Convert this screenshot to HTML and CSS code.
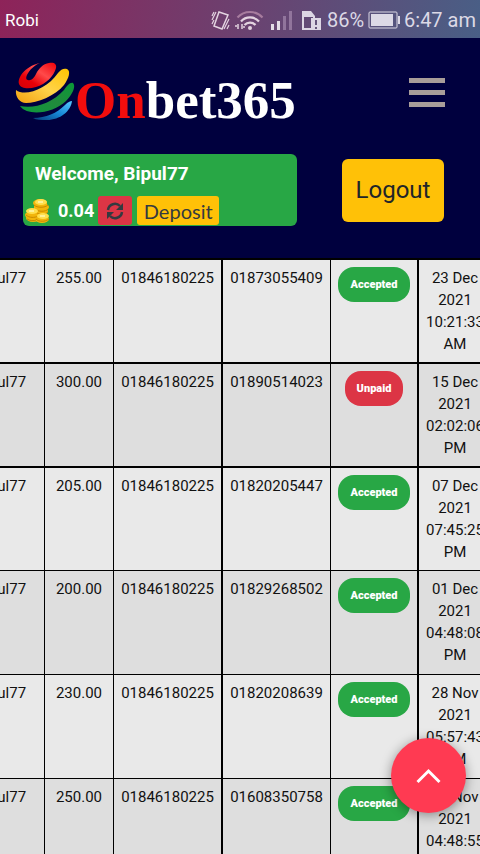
FILE: index.html
```
<!DOCTYPE html>
<html lang="en">
<head>
<meta charset="utf-8">
<meta name="viewport" content="width=device-width, initial-scale=1">
<title>Onbet365</title>
<link rel="stylesheet" href="styles.css">
</head>
<body>
<div class="status">
  <span class="carrier">Robi</span>
  <div class="status-right">
    <svg width="112" height="22" viewBox="0 0 112 22" aria-hidden="true">
      <g fill="none" stroke="#e3d3e0">
        <path d="M8 3l9 3-6 14-8-3z" stroke-width="1.500"/>
        <path d="M1 7l2-4M1 11l4-8M1 15l2-4M13 20l5-10M16 20l2-4" stroke-width="1.200"/>
      </g>
      <g fill="none" stroke="#e3d3e0" stroke-width="2.200">
        <path d="M26.500 8.500a17 17 0 0 1 25 0" stroke="#a77c9e"/>
        <path d="M30 12.500a12 12 0 0 1 18 0M33.500 16a7.500 7.500 0 0 1 11 0"/>
      </g>
      <circle cx="39" cy="19" r="2" fill="#e3d3e0"/>
      <path d="M27 15v5M24 17h2M31 15v5M32 18h2" stroke="#e3d3e0" stroke-width="1.500"/>
      <path d="M60 15h3v6h-3zM66 12h3v9h-3z" fill="#e3dce6"/>
      <path d="M72 7h3v14h-3zM78 2h3v19h-3z" fill="#91759c"/>
      <path d="M92 7v13h8M103 7v3" fill="none" stroke="#dcd6e4" stroke-width="2"/>
      <path d="M91 2h9l4 5v1H91zM100 9h10v12h-10z" fill="#dcd6e4"/>
      <path d="M105 11v5M105 18v2" stroke="#64547c" stroke-width="2"/>
    </svg>
    <span>86%</span>
    <svg width="32" height="20" viewBox="0 0 32 20" aria-hidden="true">
      <rect x="1" y="2" width="28" height="16" rx="1" fill="none" stroke="#dcd9e6" stroke-width="1"/>
      <path d="M3 4h22v12H3zM30 6h2v8h-2z" fill="#dcd9e6"/>
    </svg>
    <span>6:47 am</span>
  </div>
</div>

<header class="header">
  <div class="brand-row">
    <a class="brand" href="#">
      <svg width="60" height="62" viewBox="0 0 60 62" aria-hidden="true">
        <defs>
          <linearGradient id="r" x1="1" y1="0" x2="0" y2="1"><stop offset="0" stop-color="#f00008"/><stop offset=".4" stop-color="#ff4a4a"/><stop offset=".7" stop-color="#e80008"/><stop offset="1" stop-color="#d40008"/></linearGradient>
          <linearGradient id="y" x1="1" y1="0" x2="0" y2="1"><stop offset="0" stop-color="#ffc400"/><stop offset=".5" stop-color="#ffd34a"/><stop offset="1" stop-color="#f2a010"/></linearGradient>
          <linearGradient id="g" x1="1" y1="0" x2="0" y2="1"><stop offset="0" stop-color="#0a9a38"/><stop offset=".5" stop-color="#218b3c"/><stop offset="1" stop-color="#0b9a3c"/></linearGradient>
          <linearGradient id="b" x1="1" y1="0" x2="0" y2="1"><stop offset="0" stop-color="#58c8ff"/><stop offset=".5" stop-color="#1687d6"/><stop offset="1" stop-color="#063c78"/></linearGradient>
        </defs>
        <path d="M25 2C13 4 2 15 4 23c2 5 10 5 17 3 10-3 18-11 20-19 1-4-2-6-7-5-6 1-10 5-13 11-2 4-5 7-8 6-5-1 2-13 12-17z" fill="url(#r)"/>
        <path d="M1 29c9 7 31-1 42-17 3-4 6-5 9-4 4 2 2 9-3 16-9 11-27 18-38 18-6 0-11-6-10-13z" fill="url(#y)"/>
        <path d="M5 45c15 3 32-3 44-16 3-4 6-8 9-7 3 3 0 11-7 18C39 52 13 56 5 45z" fill="url(#g)"/>
        <path d="M57 40c-1 10-12 19-25 19-6 0-11 0-14-2 13 0 24-5 32-13 3-3 5-4 7-4z" fill="url(#b)"/>
      </svg>
      <span class="brand-text"><span class="brand-red">On</span>bet365</span>
    </a>
    <button class="menu" type="button" aria-label="Menu"><span></span><span></span><span></span></button>
  </div>
  <div class="user-row">
    <section class="wallet">
      <h1 class="welcome">Welcome, Bipul77</h1>
      <div class="balance">
        <svg width="26" height="26" viewBox="0 0 26 26" aria-hidden="true">
          <g fill="#f2b50c">
            <path d="M9 5v14h13V5z"/>
            <ellipse cx="15" cy="5" rx="7" ry="4"/>
            <ellipse cx="17" cy="9" rx="7" ry="4"/>
            <ellipse cx="16" cy="13" rx="7" ry="4"/>
            <ellipse cx="8" cy="20" rx="7" ry="4"/>
            <ellipse cx="7" cy="17" rx="7" ry="4"/>
            <ellipse cx="17" cy="21" rx="7" ry="4"/>
          </g>
          <g fill="none" stroke="#c98a00">
            <path d="M9 7c3 3 11 3 14 0M10 11c3 3 11 3 13 0M12 15c4 2 9 1 11-1M1 17c3 3 9 3 12 1M2 21c3 2 7 2 9 1M11 21c3 3 9 3 13 0"/>
          </g>
          <g fill="#ffe04e">
            <ellipse cx="16" cy="4" rx="6" ry="3"/>
            <ellipse cx="7" cy="13" rx="6" ry="3"/>
            <ellipse cx="18" cy="18" rx="6" ry="3"/>
          </g>
          <path d="M13 4h5M4 13h5M15 18h5" stroke="#fff6b0" stroke-width="1.500"/>
        </svg>
        <span class="amount">0.04</span>
        <button class="refresh" type="button" aria-label="Refresh balance">
          <svg width="18" height="18" viewBox="0 0 18 18" aria-hidden="true">
            <path d="M2 8a7 7 0 0 1 12-4M16 10a7 7 0 0 1-12 4" fill="none" stroke="#343a40" stroke-width="2.500"/>
            <path d="M17 1v7h-7zM1 17v-7h7z" fill="#343a40"/>
          </svg>
        </button>
        <button class="deposit" type="button">Deposit</button>
      </div>
    </section>
    <button class="logout" type="button">Logout</button>
  </div>
</header>

<main class="table-wrap">
  <table>
    <colgroup><col class="c-user"><col class="c-amount"><col class="c-from"><col class="c-to"><col class="c-state"><col class="c-date"></colgroup>
    <tbody>
      <tr><td>Bipul77</td><td>255.00</td><td>01846180225</td><td>01873055409</td><td><span class="badge">Accepted</span></td><td>23 Dec 2021 10:21:33 AM</td></tr>
      <tr><td>Bipul77</td><td>300.00</td><td>01846180225</td><td>01890514023</td><td><span class="badge unpaid">Unpaid</span></td><td>15 Dec 2021 02:02:06 PM</td></tr>
      <tr class="thin first"><td>Bipul77</td><td>205.00</td><td>01846180225</td><td>01820205447</td><td><span class="badge">Accepted</span></td><td>07 Dec 2021 07:45:25 PM</td></tr>
      <tr class="thin"><td>Bipul77</td><td>200.00</td><td>01846180225</td><td>01829268502</td><td><span class="badge">Accepted</span></td><td>01 Dec 2021 04:48:08 PM</td></tr>
      <tr class="thin"><td>Bipul77</td><td>230.00</td><td>01846180225</td><td>01820208639</td><td><span class="badge">Accepted</span></td><td>28 Nov 2021 05:57:43 PM</td></tr>
      <tr class="thin"><td>Bipul77</td><td>250.00</td><td>01846180225</td><td>01608350758</td><td><span class="badge">Accepted</span></td><td>28 Nov 2021 04:48:55 PM</td></tr>
    </tbody>
  </table>
</main>

<a class="to-top" href="#" aria-label="Back to top">
  <svg width="25" height="16" viewBox="0 0 25 16" aria-hidden="true"><path d="M1.500 14l11-11 11 11" fill="none" stroke="#fff" stroke-width="3"/></svg>
</a>
</body>
</html>
```
FILE: styles.css
```
* { box-sizing: border-box; }

html { height: 100%; }

body {
  height: 100%;
  margin: 0;
  overflow: hidden;
  font-family: Roboto, "Liberation Sans", sans-serif;
  font-size: 15px;
  line-height: 22px;
  color: #111;
  background: #e9e9e9;
}

button { border: 0; padding: 0; font: inherit; cursor: pointer; }
svg { display: block; flex: none; }

.status {
  display: flex;
  align-items: center;
  justify-content: space-between;
  height: 38px;
  padding: 2px 4px 0 5px;
  background: linear-gradient(100deg, #8e2359, #495f86);
}
.carrier { color: #fff; font-size: 17px; }
.status-right {
  display: flex;
  align-items: center;
  gap: 4px;
  color: #dcd9e6;
  font-size: 20px;
}

.header {
  padding: 20px 23px 32px;
  background: #00003e;
}
.brand-row {
  display: flex;
  align-items: center;
  justify-content: space-between;
  height: 68px;
  margin: 0 12px 0 -8px;
}
.brand {
  display: flex;
  align-items: center;
  color: #fff;
  text-decoration: none;
}
.brand-text {
  padding-top: 16px;
  font-family: "Liberation Serif", serif;
  font-size: 53px;
  font-weight: 700;
  line-height: 60px;
}
.brand-red { color: #f20d0d; }
.menu {
  display: grid;
  gap: 7px;
  width: 36px;
  background: none;
}
.menu span { height: 5px; background: #a89d99; }

.user-row {
  display: flex;
  align-items: center;
  justify-content: space-between;
  gap: 45px;
  margin-top: 28px;
}
.wallet {
  flex: 1;
  height: 72px;
  padding: 8px 2px 0;
  border-radius: 6px;
  color: #fff;
  background: #28a745;
}
.welcome { margin: 0 0 0 10px; font-size: 19px; font-weight: 700; line-height: 24px; }
.balance { display: flex; align-items: center; margin-top: 10px; }
.amount { margin: 0 4px 0 7px; font-size: 18px; font-weight: 700; }
.refresh {
  display: grid;
  place-items: center;
  width: 34px;
  height: 29px;
  margin-right: 5px;
  border-radius: 3px;
  background: #dc3545;
}
.deposit {
  width: 82px;
  height: 29px;
  border-radius: 3px;
  font-family: Lato, sans-serif;
  font-size: 20px;
  color: #343a40;
  background: #ffc107;
}
.logout {
  width: 102px;
  height: 63px;
  margin-right: 13px;
  border-radius: 6px;
  font-size: 24px;
  color: #212529;
  background: #ffc107;
}

.table-wrap { overflow: hidden; }
table {
  width: 533px;
  /* scrolled sideways past the start of the first column */
  margin-left: -42px;
  table-layout: fixed;
  border-spacing: 0;
  border-top: 2px solid #000;
}
.c-user { width: 87px; }
.c-amount { width: 69px; }
.c-from { width: 109px; }
.c-to { width: 108px; }
.c-state { width: 88px; }
.c-date { width: 72px; }
td {
  height: 104px;
  padding: 7px;
  border-right: 1px solid #000;
  border-bottom: 2px solid #000;
  text-align: center;
  vertical-align: top;
}
td:nth-child(3), td:nth-child(5) { border-right-width: 2px; }
td:last-child { border-right: 0; }
.thin td { border-bottom-width: 1px; }
.first td { height: 103px; }
tr:nth-child(even) { background: #dedede; }

.badge {
  display: inline-block;
  padding: 0 12px;
  border-radius: 16px;
  font-size: 11px;
  font-weight: 900;
  line-height: 35px;
  color: #fff;
  background: #28a745;
}
.unpaid { background: #dc3545; }

.to-top {
  position: fixed;
  right: 14px;
  bottom: 41px;
  display: grid;
  place-items: center;
  width: 75px;
  height: 75px;
  border-radius: 50%;
  background: #ff3a52;
  box-shadow: 0 2px 12px rgba(0, 0, 0, 0.4);
}
```
